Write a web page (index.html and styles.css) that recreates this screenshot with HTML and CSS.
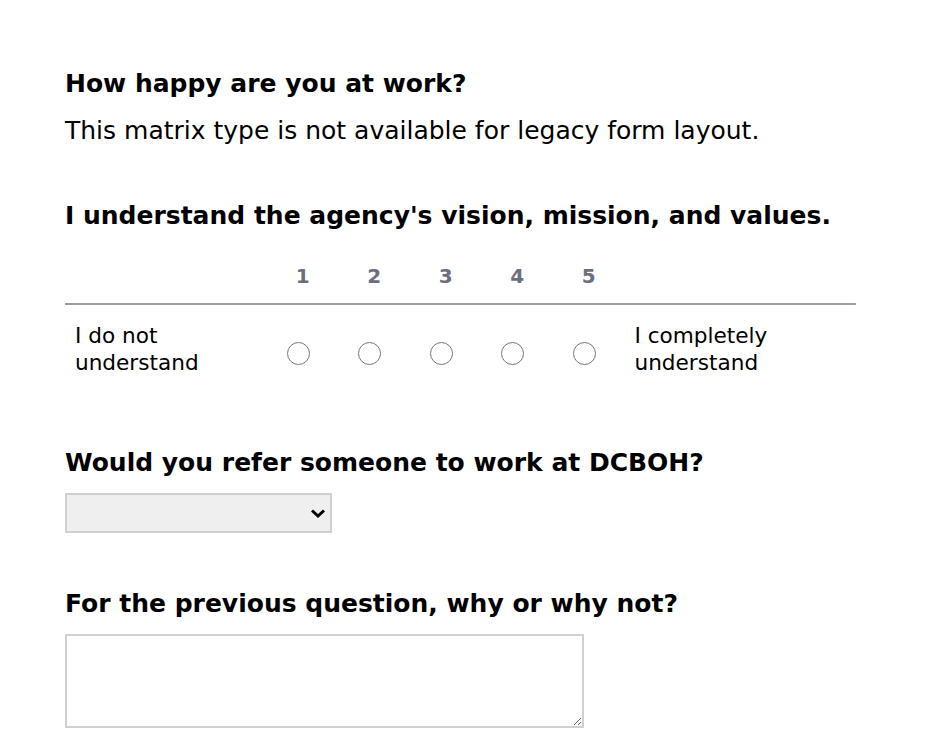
FILE: index.html
```html
<!DOCTYPE html>
<html lang="en">

<head>
    <meta charset="UTF-8" />
    <meta name="viewport" content="width=device-width, initial-scale=1" />
    <title>Employee Survey</title>
    <link rel="stylesheet" href="styles.css">
</head>

<body>
    <form class="survey">
        <!-- Question 1 -->
        <div class="question intro">
            <h2 class="question-title">How happy are you at work?</h2>
            <p class="notice">This matrix type is not available for legacy form layout.</p>
        </div>

        <!-- Question 2: matrix -->
        <div class="question">
            <h2 class="question-title">I understand the agency's vision, mission, and values.</h2>
            <table class="matrix">
                <thead>
                    <tr>
                        <th class="side"></th>
                        <th>1</th>
                        <th>2</th>
                        <th>3</th>
                        <th>4</th>
                        <th>5</th>
                        <th class="side"></th>
                    </tr>
                </thead>
                <tbody>
                    <tr>
                        <td class="label left">I do not understand</td>
                        <td><input type="radio" name="vision" value="1" /></td>
                        <td><input type="radio" name="vision" value="2" /></td>
                        <td><input type="radio" name="vision" value="3" /></td>
                        <td><input type="radio" name="vision" value="4" /></td>
                        <td><input type="radio" name="vision" value="5" /></td>
                        <td class="label">I completely understand</td>
                    </tr>
                </tbody>
            </table>
        </div>

        <!-- Question 3 -->
        <div class="question">
            <h2 class="question-title">Would you refer someone to work at DCBOH?</h2>
            <div class="select-wrap">
                <select name="refer">
                    <option value=""></option>
                    <option value="yes">Yes</option>
                    <option value="no">No</option>
                </select>
                <svg class="chevron" width="16" height="11" viewBox="0 0 16 11">
                    <path d="M2 2.5 L8 8 L14 2.5" fill="none" stroke="#000" stroke-width="3" />
                </svg>
            </div>
        </div>

        <!-- Question 4 -->
        <div class="question">
            <h2 class="question-title">For the previous question, why or why not?</h2>
            <textarea name="why"></textarea>
        </div>
    </form>
</body>

</html>
```

FILE: styles.css
```css
body {
    margin: 0;
    padding: 0;
    font-family: "DejaVu Sans", Verdana, sans-serif;
    background-color: #fff;
    color: #000;
}

.survey {
    padding: 67px 65px 0;
}

.question {
    margin-bottom: 54px;
}

.question.intro {
    margin-bottom: 51px;
}

.question-title {
    font-size: 25px;
    font-weight: bold;
    margin: 0 0 13px;
    line-height: 34px;
}

.notice {
    font-size: 25px;
    margin: 0;
    line-height: 34px;
}

.matrix {
    width: 791px;
    border-collapse: separate;
    border-spacing: 0;
    margin-top: 31px;
    table-layout: fixed;
}

.matrix th {
    font-size: 20px;
    font-weight: bold;
    color: #6c6f7e;
    width: 71.5px;
    line-height: 24px;
    padding: 0 0 15px;
    border-bottom: 2px solid #9c9ca6;
    text-align: center;
}

.matrix th.side {
    width: 202px;
}

.matrix th.side:last-child {
    width: auto;
}

.matrix td {
    text-align: center;
    vertical-align: middle;
    padding: 17px 0 16px;
}

.matrix td.label {
    text-align: left;
    font-size: 21.6px;
    line-height: 27px;
    padding-left: 10px;
    padding-right: 10px;
}

.matrix input[type="radio"] {
    display: block;
    width: 23px;
    height: 23px;
    margin: 9px 0 0 calc(50% - 16px);
}

.select-wrap {
    position: relative;
    width: 267px;
}

.select-wrap select {
    display: block;
    width: 267px;
    height: 40px;
    appearance: none;
    background: #efefef;
    border: 2px solid #d0d0d0;
    border-radius: 0;
    font-family: inherit;
    font-size: 18px;
}

.chevron {
    position: absolute;
    right: 6px;
    top: 15px;
    pointer-events: none;
}

textarea {
    display: block;
    width: 519px;
    height: 94px;
    box-sizing: border-box;
    border: 2px solid #d0d0d0;
    border-radius: 0;
    font-family: inherit;
    font-size: 18px;
}
```
